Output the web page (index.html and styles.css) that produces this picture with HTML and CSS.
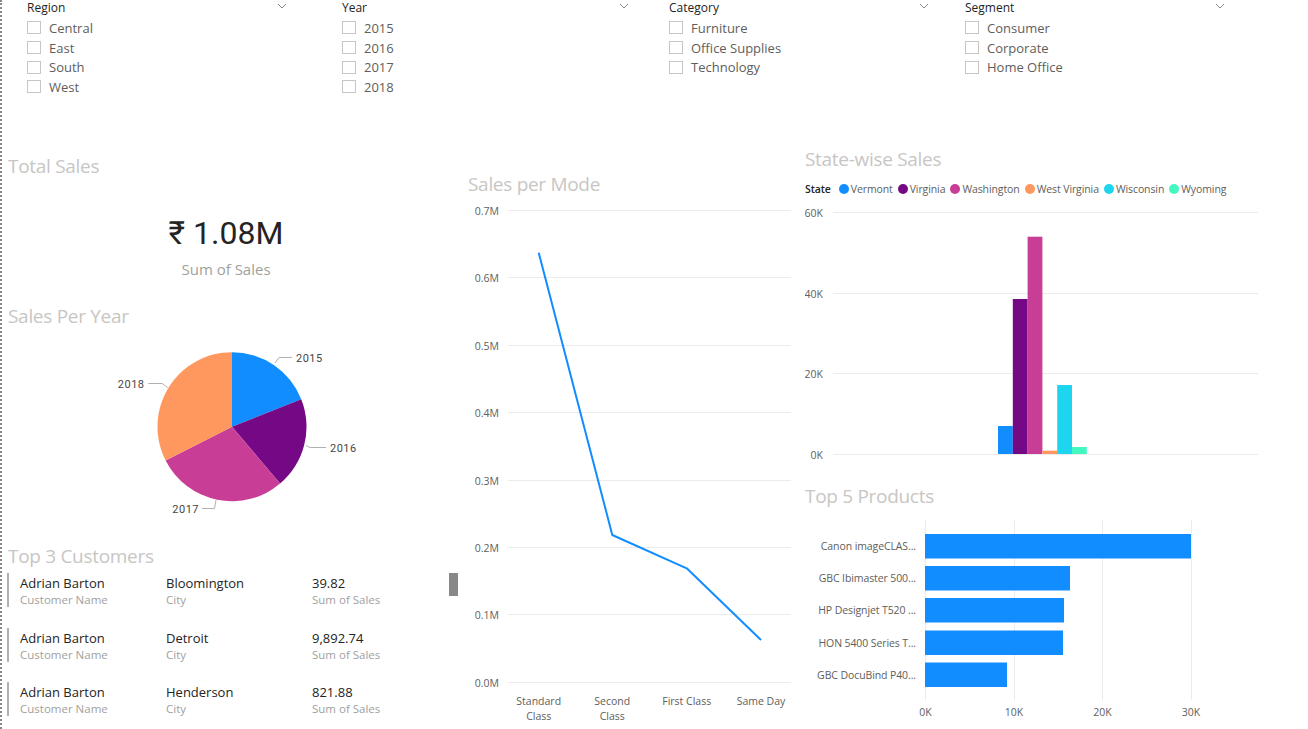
FILE: index.html
```html
<!DOCTYPE html>
<html lang="en">
<head>
<meta charset="utf-8">
<title>Sales Dashboard</title>
<link rel="stylesheet" href="styles.css">
</head>
<body>
<div class="page">
  <div class="slicers">
    <div class="slicer">
      <div class="slicer-head"><span>Region</span><svg class="chev" width="10" height="6" viewBox="0 0 10 6"><path d="M1 1 L5 5 L9 1"/></svg></div>
      <ul class="slicer-list">
        <li><span class="box"></span>Central</li>
        <li><span class="box"></span>East</li>
        <li><span class="box"></span>South</li>
        <li><span class="box"></span>West</li>
      </ul>
    </div>
    <div class="slicer wide">
      <div class="slicer-head"><span>Year</span><svg class="chev" width="10" height="6" viewBox="0 0 10 6"><path d="M1 1 L5 5 L9 1"/></svg></div>
      <ul class="slicer-list">
        <li><span class="box"></span>2015</li>
        <li><span class="box"></span>2016</li>
        <li><span class="box"></span>2017</li>
        <li><span class="box"></span>2018</li>
      </ul>
    </div>
    <div class="slicer">
      <div class="slicer-head"><span>Category</span><svg class="chev" width="10" height="6" viewBox="0 0 10 6"><path d="M1 1 L5 5 L9 1"/></svg></div>
      <ul class="slicer-list">
        <li><span class="box"></span>Furniture</li>
        <li><span class="box"></span>Office Supplies</li>
        <li><span class="box"></span>Technology</li>
      </ul>
    </div>
    <div class="slicer">
      <div class="slicer-head"><span>Segment</span><svg class="chev" width="10" height="6" viewBox="0 0 10 6"><path d="M1 1 L5 5 L9 1"/></svg></div>
      <ul class="slicer-list">
        <li><span class="box"></span>Consumer</li>
        <li><span class="box"></span>Corporate</li>
        <li><span class="box"></span>Home Office</li>
      </ul>
    </div>
  </div>

  <div class="main">
    <section class="col col-left">
      <h2 class="title t-total">Total Sales</h2>
      <div class="card">
        <div class="card-value">₹ 1.08M</div>
        <div class="card-label">Sum of Sales</div>
      </div>

      <h2 class="title t-year">Sales Per Year</h2>
      <svg class="pie" width="440" height="215" viewBox="0 0 440 215">
        <path d="M224 97.7 L224 23.2 A74.5 74.5 0 0 1 293.22 70.16 Z" fill="#118DFF"/>
        <path d="M224 97.7 L293.22 70.16 A74.5 74.5 0 0 1 272.09 154.6 Z" fill="#750985"/>
        <path d="M224 97.7 L272.09 154.6 A74.5 74.5 0 0 1 157.62 131.52 Z" fill="#C83D95"/>
        <path d="M224 97.7 L157.62 131.52 A74.5 74.5 0 0 1 224 23.2 Z" fill="#FF985E"/>
        <g class="leader">
          <polyline points="267,34 271,28.5 284,28.5"/>
          <polyline points="298,116.5 302,118.5 318,118.5"/>
          <polyline points="208,171 206.5,179.5 194,179.5"/>
          <polyline points="159.7,58.7 154.3,54.5 140.3,54.5"/>
        </g>
        <g class="pie-lab">
          <text x="288" y="32.5">2015</text>
          <text x="322" y="122.5">2016</text>
          <text x="191" y="183.5" text-anchor="end">2017</text>
          <text x="136.5" y="58.5" text-anchor="end">2018</text>
        </g>
      </svg>

      <h2 class="title">Top 3 Customers</h2>
      <div class="table">
        <div class="rows">
          <div class="row">
            <div class="cell"><div class="v">Adrian Barton</div><div class="k">Customer Name</div></div>
            <div class="cell"><div class="v">Bloomington</div><div class="k">City</div></div>
            <div class="cell"><div class="v">39.82</div><div class="k">Sum of Sales</div></div>
          </div>
          <div class="row">
            <div class="cell"><div class="v">Adrian Barton</div><div class="k">Customer Name</div></div>
            <div class="cell"><div class="v">Detroit</div><div class="k">City</div></div>
            <div class="cell"><div class="v">9,892.74</div><div class="k">Sum of Sales</div></div>
          </div>
          <div class="row">
            <div class="cell"><div class="v">Adrian Barton</div><div class="k">Customer Name</div></div>
            <div class="cell"><div class="v">Henderson</div><div class="k">City</div></div>
            <div class="cell"><div class="v">821.88</div><div class="k">Sum of Sales</div></div>
          </div>
        </div>
        <div class="scroll"><div class="thumb"></div></div>
      </div>
    </section>

    <section class="col col-mid">
      <h2 class="title t-mode">Sales per Mode</h2>
      <svg class="chart" width="335" height="533" viewBox="0 0 335 533">
        <g class="grid">
          <line x1="48" x2="331" y1="14.5" y2="14.5"/>
          <line x1="48" x2="331" y1="81.5" y2="81.5"/>
          <line x1="48" x2="331" y1="149.5" y2="149.5"/>
          <line x1="48" x2="331" y1="216.5" y2="216.5"/>
          <line x1="48" x2="331" y1="284.5" y2="284.5"/>
          <line x1="48" x2="331" y1="351.5" y2="351.5"/>
          <line x1="48" x2="331" y1="418.5" y2="418.5"/>
          <line x1="48" x2="331" y1="486.5" y2="486.5"/>
        </g>
        <g class="axis" text-anchor="end">
          <text x="39" y="18.5">0.7M</text>
          <text x="39" y="85.5">0.6M</text>
          <text x="39" y="153.5">0.5M</text>
          <text x="39" y="220.5">0.4M</text>
          <text x="39" y="288.5">0.3M</text>
          <text x="39" y="355.5">0.2M</text>
          <text x="39" y="422.5">0.1M</text>
          <text x="39" y="490.5">0.0M</text>
        </g>
        <polyline class="line" points="78.7,56.7 152.3,339 226.7,372.3 301,444"/>
        <g class="axis" text-anchor="middle">
          <text x="78.7" y="509">Standard</text>
          <text x="78.7" y="523.5">Class</text>
          <text x="152.3" y="509">Second</text>
          <text x="152.3" y="523.5">Class</text>
          <text x="226.7" y="509">First Class</text>
          <text x="301" y="509">Same Day</text>
        </g>
      </svg>
    </section>

    <section class="col col-right">
      <h2 class="title t-state">State-wise Sales</h2>
      <div class="legend">
        <span class="legend-title">State</span>
        <span class="li"><i style="background:#118DFF"></i>Vermont</span>
        <span class="li"><i style="background:#750985"></i>Virginia</span>
        <span class="li"><i style="background:#C83D95"></i>Washington</span>
        <span class="li"><i style="background:#FF985E"></i>West Virginia</span>
        <span class="li"><i style="background:#1DD5EE"></i>Wisconsin</span>
        <span class="li"><i style="background:#42F7C0"></i>Wyoming</span>
      </div>
      <svg class="chart" width="460" height="287" viewBox="0 0 460 287">
        <g class="grid">
          <line x1="28" x2="453" y1="15.5" y2="15.5"/>
          <line x1="28" x2="453" y1="96.5" y2="96.5"/>
          <line x1="28" x2="453" y1="176.5" y2="176.5"/>
          <line x1="28" x2="453" y1="257.5" y2="257.5"/>
        </g>
        <g class="axis" text-anchor="end">
          <text x="18" y="19.5">60K</text>
          <text x="18" y="100.5">40K</text>
          <text x="18" y="180.5">20K</text>
          <text x="18" y="261.5">0K</text>
        </g>
        <rect x="193" y="229" width="14.8" height="28" fill="#118DFF"/>
        <rect x="207.8" y="102" width="14.8" height="155" fill="#750985"/>
        <rect x="222.6" y="39.7" width="14.8" height="217.3" fill="#C83D95"/>
        <rect x="237.4" y="253.7" width="14.8" height="3.3" fill="#FF985E"/>
        <rect x="252.2" y="188" width="14.8" height="69" fill="#1DD5EE"/>
        <rect x="267" y="250" width="14.8" height="7" fill="#42F7C0"/>
      </svg>

      <h2 class="title">Top 5 Products</h2>
      <svg class="chart" width="460" height="221" viewBox="0 0 460 221">
        <g class="grid">
          <line x1="120.5" x2="120.5" y1="12" y2="192"/>
          <line x1="209.5" x2="209.5" y1="12" y2="192"/>
          <line x1="297.5" x2="297.5" y1="12" y2="192"/>
          <line x1="386.5" x2="386.5" y1="12" y2="192"/>
        </g>
        <g fill="#118DFF">
          <rect x="120" y="26" width="266" height="24.5"/>
          <rect x="120" y="58" width="145" height="24.5"/>
          <rect x="120" y="90" width="139" height="24.5"/>
          <rect x="120" y="122.5" width="138" height="24.5"/>
          <rect x="120" y="154.5" width="82" height="24.5"/>
        </g>
        <g class="axis prod" text-anchor="end">
          <text x="111" y="42">Canon imageCLAS...</text>
          <text x="111" y="74">GBC Ibimaster 500...</text>
          <text x="111" y="106">HP Designjet T520 ...</text>
          <text x="111" y="138.5">HON 5400 Series T...</text>
          <text x="111" y="170.5">GBC DocuBind P40...</text>
        </g>
        <g class="axis" text-anchor="middle">
          <text x="120.5" y="208">0K</text>
          <text x="209" y="208">10K</text>
          <text x="297.5" y="208">20K</text>
          <text x="386" y="208">30K</text>
        </g>
      </svg>
    </section>
  </div>
</div>
</body>
</html>
```

FILE: styles.css
```css
* {
  box-sizing: border-box;
  margin: 0;
  padding: 0;
}

html,
body {
  width: 1308px;
  height: 729px;
  overflow: hidden;
  background: #ffffff;
}

body {
  font-family: "Open Sans", "Noto Sans", sans-serif;
  color: #252423;
}

.page {
  width: 1308px;
  height: 729px;
  border-left: 2px dotted #8a8886;
}

/* ---------- slicers ---------- */
.slicers {
  display: grid;
  grid-template-columns: 315px 327px 296px 263px;
  padding-left: 25px;
  height: 100px;
}

.slicer {
  width: 263px;
}

.slicer.wide {
  width: 290px;
}

.slicer-head {
  display: flex;
  justify-content: space-between;
  align-items: center;
  height: 14px;
  padding-top: 1px;
  font-size: 12px;
  line-height: 14px;
  color: #252423;
}

.chev {
  margin-right: 3px;
  margin-top: -3px;
}

.chev path {
  fill: none;
  stroke: #8a8886;
  stroke-width: 1;
}

.slicer-list {
  list-style: none;
  margin-top: 4px;
}

.slicer-list li {
  display: flex;
  align-items: center;
  height: 19.7px;
  font-size: 13px;
  color: #605e5c;
  white-space: nowrap;
}

.box {
  width: 14px;
  height: 13px;
  border: 1px solid #c8c6c4;
  margin-right: 8px;
  flex: none;
}

/* ---------- main grid ---------- */
.main {
  display: grid;
  grid-template-columns: 458px 335px 1fr;
  height: 629px;
}

.col {
  display: flex;
  flex-direction: column;
}

.title {
  font-size: 19px;
  line-height: 24px;
  font-weight: 400;
  letter-spacing: -0.3px;
  color: #c8c6c4;
  white-space: nowrap;
}

/* left column */
.col-left {
  padding-left: 6px;
}

.t-total {
  margin-top: 54px;
}

.card {
  width: 436px;
  text-align: center;
}

.card-value {
  margin-top: 35px;
  font-family: Roboto, "Noto Sans", "DejaVu Sans", sans-serif;
  font-size: 32px;
  line-height: 40px;
  color: #252423;
}

.card-label {
  margin-top: 6px;
  font-size: 15px;
  line-height: 20px;
  color: #a19f9d;
}

.t-year {
  margin-top: 25px;
}

.pie {
  display: block;
  margin-top: 1px;
}

.leader polyline {
  fill: none;
  stroke: #b3b0ad;
  stroke-width: 1;
}

.pie-lab text {
  font-family: Roboto, "Open Sans", sans-serif;
  font-size: 11px;
  font-weight: 400;
  letter-spacing: 0.5px;
  fill: #484644;
}

.table {
  display: flex;
  margin: 5px 2px 0 -1px;
}

.rows {
  flex: 1;
  display: flex;
  flex-direction: column;
  gap: 20.7px;
}

.row {
  display: grid;
  grid-template-columns: 146px 146px 1fr;
  height: 34px;
  padding-top: 1px;
  padding-left: 11px;
  border-left: 2px solid #b3b0ad;
}

.cell .v {
  font-size: 13px;
  line-height: 18px;
  color: #252423;
  white-space: nowrap;
}

.cell .k {
  font-size: 11.5px;
  line-height: 15px;
  color: #a19f9d;
  white-space: nowrap;
}

.scroll {
  width: 9px;
}

.thumb {
  width: 9px;
  height: 23px;
  background: #8a8886;
}

/* middle column */
.t-mode {
  margin-top: 72px;
  padding-left: 8px;
}

.chart {
  display: block;
}

.grid line {
  stroke: #ebebeb;
  stroke-width: 1;
}

.axis text {
  font-family: "Open Sans", sans-serif;
  font-size: 10.5px;
  fill: #605e5c;
}

.axis.prod text {
  font-size: 10.5px;
  letter-spacing: -0.1px;
}

.line {
  fill: none;
  stroke: #118dff;
  stroke-width: 2;
  stroke-linejoin: round;
}

/* right column */
.col-right {
  padding-left: 10px;
}

.t-state {
  margin-top: 47px;
}

.legend {
  display: flex;
  align-items: center;
  margin-top: 10px;
  height: 16px;
  font-size: 10.5px;
  line-height: 16px;
  color: #605e5c;
  white-space: nowrap;
  letter-spacing: -0.1px;
}

.legend-title {
  color: #252423;
  font-weight: 600;
  margin-right: 8px;
}

.li {
  display: flex;
  align-items: center;
  margin-right: 5px;
}

.li i {
  display: block;
  width: 10px;
  height: 10px;
  border-radius: 50%;
  margin-right: 2px;
}
```
